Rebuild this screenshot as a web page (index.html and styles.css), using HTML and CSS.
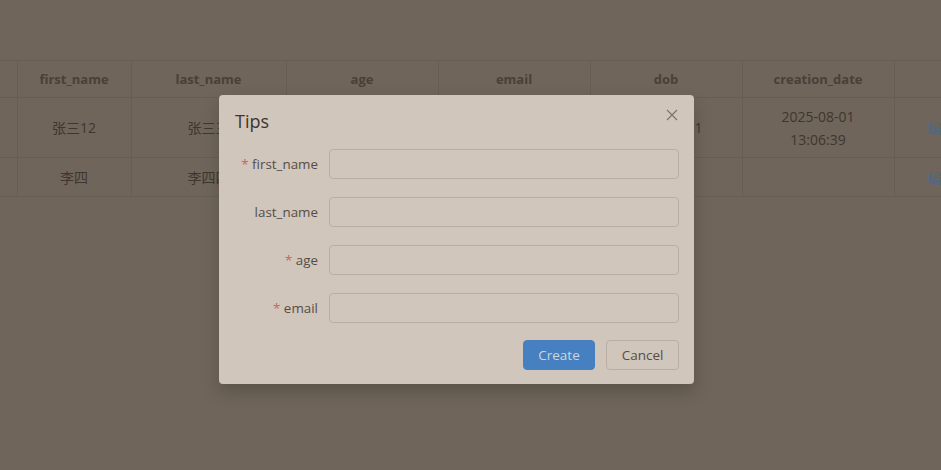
FILE: index.html
```html
<!DOCTYPE html>
<html>
<head>
<meta charset="utf-8">
<link rel="stylesheet" href="styles.css">
</head>
<body>
<div class="page">
  <table class="grid">
    <colgroup>
      <col class="c0"><col class="c1"><col class="c2"><col class="c3"><col class="c4"><col class="c5"><col class="c6"><col class="c7">
    </colgroup>
    <thead>
      <tr class="head">
        <th></th><th>first_name</th><th>last_name</th><th>age</th><th>email</th><th>dob</th><th>creation_date</th><th></th>
      </tr>
    </thead>
    <tbody>
      <tr class="r1">
        <td></td><td>张三12</td><td>张三三</td><td>18</td><td>zhangsan@qq.com</td><td>2025-08-01</td><td>2025-08-01<br>13:06:39</td><td class="ops"><span class="link">编辑</span></td>
      </tr>
      <tr class="r2">
        <td></td><td>李四</td><td>李四四</td><td>20</td><td>lisi@qq.com</td><td></td><td></td><td class="ops"><span class="link">编辑</span></td>
      </tr>
    </tbody>
  </table>
</div>

<div class="dialog">
  <div class="dlg-head">
    <span class="dlg-title">Tips</span>
    <span class="dlg-close">
      <svg width="12" height="12" viewBox="0 0 12 12"><path d="M1 1 L11 11 M11 1 L1 11" stroke="#7b7168" stroke-width="1.1" fill="none"/></svg>
    </span>
  </div>
  <form class="form">
    <div class="item"><label class="lbl"><span class="req">*</span> first_name</label><div class="inp"></div></div>
    <div class="item"><label class="lbl">last_name</label><div class="inp"></div></div>
    <div class="item"><label class="lbl"><span class="req">*</span> age</label><div class="inp"></div></div>
    <div class="item"><label class="lbl"><span class="req">*</span> email</label><div class="inp"></div></div>
  </form>
  <div class="dlg-foot">
    <button type="button" class="btn primary">Create</button>
    <button type="button" class="btn cancel">Cancel</button>
  </div>
</div>
</body>
</html>
```

FILE: styles.css
```css
html, body {
  margin: 0;
  padding: 0;
  background: #6f655b;
  width: 941px;
  height: 470px;
  overflow: hidden;
  font-family: "Open Sans", "Noto Sans CJK SC", sans-serif;
}
.page {
  padding-top: 60px;
  width: 941px;
  overflow: hidden;
}
.grid {
  border-collapse: collapse;
  table-layout: fixed;
  width: 1000px;
  font-size: 14px;
  color: #3e362f;
}
.c0 { width: 17px; }
.c1 { width: 114px; }
.c2 { width: 155px; }
.c3 { width: 152px; }
.c4 { width: 152px; }
.c5 { width: 152px; }
.c6 { width: 152px; }
.c7 { width: 106px; }
.grid th, .grid td {
  border: 1px solid #675d53;
  border-top: none;
  text-align: center;
  padding: 0 4px;
  white-space: nowrap;
  overflow: hidden;
  line-height: 23px;
}
.grid th:first-child, .grid td:first-child { border-left: none; }
.head th {
  border-top: 1px solid #675d53;
  height: 36px;
  font-size: 13px;
  font-weight: 700;
  color: #4a4037;
}
.r1 td { height: 59px; }
.r2 td { height: 38px; }
.grid td.ops {
  text-align: left;
  padding-left: 33px;
}
.link { color: #48698c; }

.dialog {
  position: absolute;
  left: 219px;
  top: 95px;
  width: 475px;
  height: 289px;
  box-sizing: border-box;
  padding: 14px 15px 16px 16px;
  background: #d0c6bc;
  border-radius: 4px;
  box-shadow: 0 8px 16px rgba(40, 32, 24, 0.25);
  display: flex;
  flex-direction: column;
}
.dlg-head {
  height: 24px;
  display: flex;
  align-items: center;
  padding-bottom: 16px;
}
.dlg-title {
  font-size: 18px;
  line-height: 24px;
  color: #3d352e;
}
.dlg-close {
  position: absolute;
  right: 16px;
  top: 14px;
  width: 12px;
  height: 12px;
  display: flex;
}
.form {
  margin: 0;
  display: flex;
  flex-direction: column;
  gap: 18px;
}
.item {
  display: flex;
  align-items: center;
  height: 30px;
}
.lbl {
  width: 94px;
  box-sizing: border-box;
  padding-right: 11px;
  text-align: right;
  font-size: 13.4px;
  color: #574d44;
  white-space: nowrap;
}
.req { color: #c8675c; }
.inp {
  flex: 1;
  height: 30px;
  box-sizing: border-box;
  border: 1px solid #b8aea5;
  border-radius: 4px;
  background: #d0c6bc;
}
.dlg-foot {
  margin-top: 17px;
  display: flex;
  justify-content: flex-end;
  gap: 11px;
}
.btn {
  height: 30px;
  width: 72px;
  box-sizing: border-box;
  padding: 0;
  border: 1px solid #b8aea5;
  border-radius: 4px;
  background: #d0c6bc;
  color: #574d44;
  font-family: "Open Sans", sans-serif;
  font-size: 13.5px;
}
.btn.cancel { width: 73px; }
.btn.primary {
  background: #4680c0;
  border-color: #4680c0;
  color: #cdd5de;
}
```
